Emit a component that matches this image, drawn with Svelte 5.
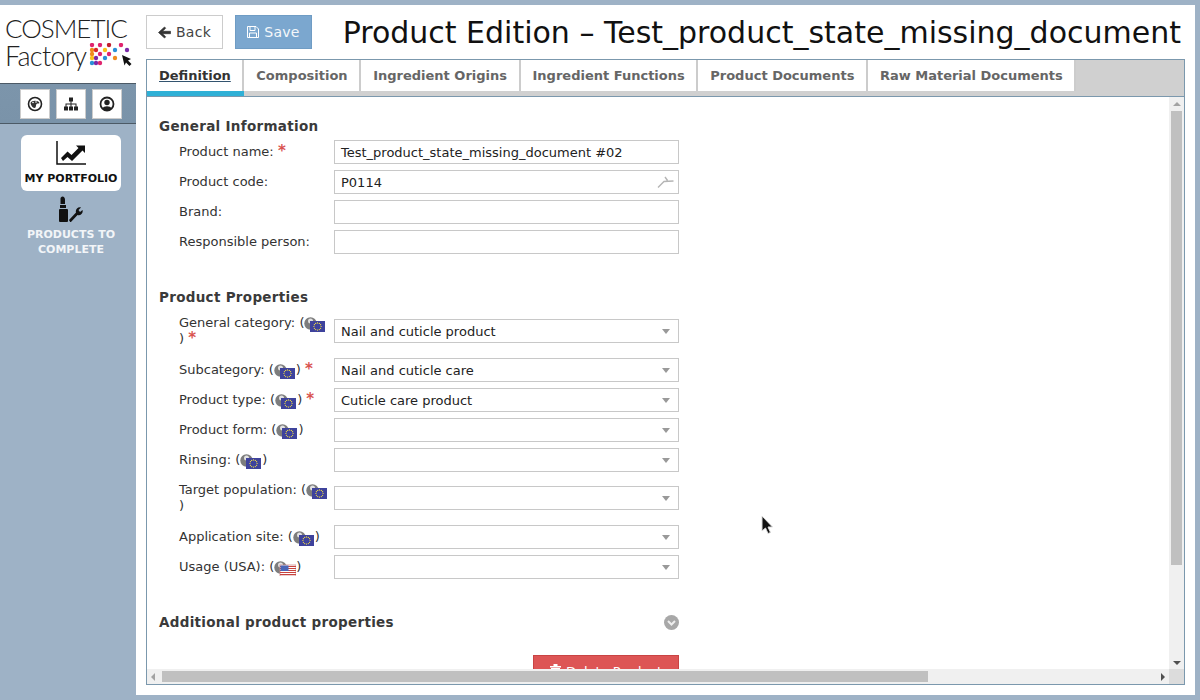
<script>
	const tabs = [
		'Definition',
		'Composition',
		'Ingredient Origins',
		'Ingredient Functions',
		'Product Documents',
		'Raw Material Documents',
	];
	const general = [
		{ label: 'Product name:', value: 'Test_product_state_missing_document #02', required: true },
		{ label: 'Product code:', value: 'P0114', tool: true },
		{ label: 'Brand:', value: '' },
		{ label: 'Responsible person:', value: '' },
	];
	const properties = [
		{ label: 'General category:', value: 'Nail and cuticle product', required: true, tall: true },
		{ label: 'Subcategory:', value: 'Nail and cuticle care', required: true },
		{ label: 'Product type:', value: 'Cuticle care product', required: true },
		{ label: 'Product form:', value: '' },
		{ label: 'Rinsing:', value: '' },
		{ label: 'Target population:', value: '', tall: true },
		{ label: 'Application site:', value: '' },
		{ label: 'Usage (USA):', value: '', usa: true },
	];
	const dots = [
		[4, 2, '#e0246e'], [12, 2, '#e0246e'], [21, 2, '#c2202f'], [33, 2, '#e0246e'],
		[4, 7, '#f08a1d'], [8, 7, '#d9262c'], [17, 7, '#fbc21b'], [27, 7, '#2b8fd8'], [39, 7, '#7a2aa8'],
		[4, 11, '#f08a1d'], [12, 11, '#e0246e'], [21, 11, '#e0246e'],
		[4, 15, '#fbc21b'], [8, 15, '#7a2aa8'], [17, 15, '#2b8fd8'], [27, 15, '#f08a1d'],
		[4, 20, '#2b8fd8'], [8, 20, '#7a2aa8'], [12, 20, '#e0246e'],
	];
	const starAngles = [0, 30, 60, 90, 120, 150, 180, 210, 240, 270, 300, 330];
</script>

{#snippet origin(usa)}
	(<svg class="origin-icon" width="22" height="15" viewBox="0 0 22 15">
		<circle cx="6.500" cy="6.500" r="6.200" fill="#7d7d7d" />
		<circle cx="6.500" cy="4" r="2.500" fill="#e2e2e2" />
		{#if usa}
			<rect x="6" y="4" width="16" height="11" fill="#fff" stroke="#d08a8a" stroke-width="0.8" />
			{#each [5, 7, 9, 11, 13] as y}
				<rect x="6" {y} width="16" height="1" fill="#c8423e" />
			{/each}
			<rect x="6.500" y="4.500" width="8" height="5.500" fill="#4a66b8" />
		{:else}
			<rect x="6" y="4" width="15" height="11" fill="#3e429c" />
			{#each starAngles as a}
				<circle cx={13.5 + 3.6 * Math.cos((a * Math.PI) / 180)} cy={9.5 + 3.6 * Math.sin((a * Math.PI) / 180)} r="0.600" fill="#ffe93a" />
			{/each}
		{/if}
	</svg>)
{/snippet}

<div class="page">
	<aside class="sidebar">
		<div class="logo">
			<div class="logo-top">COSMETIC</div>
			<div class="logo-bottom">
				<span>Factory</span>
				<svg class="logo-dots" width="46" height="24" viewBox="0 0 46 24">
					{#each dots as [x, y, c]}
						<circle cx={x} cy={y} r="2.200" fill={c} />
					{/each}
					<path d="M34 12l9 4-3 1.500 3.500 3.500-2 2-3.500-3.500-1.500 3z" fill="#111" />
				</svg>
			</div>
		</div>
		<div class="toolbar">
			<button class="tool" aria-label="Palette">
				<svg width="16" height="16" viewBox="0 0 16 16">
					<circle cx="8" cy="8" r="6.500" fill="none" stroke="#222" stroke-width="1.600" />
					<path d="M3.500 7c1-3 8-3 9 0-1 1-2 0-3 1s0 3-1.500 4C6 12 4 10 3.500 7z" fill="#333" />
					<circle cx="6" cy="6.500" r="0.800" fill="#fff" />
					<circle cx="9" cy="6" r="0.800" fill="#fff" />
				</svg>
			</button>
			<button class="tool" aria-label="Organisation">
				<svg width="16" height="16" viewBox="0 0 16 16" fill="#222">
					<rect x="6" y="1.500" width="4" height="4" />
					<rect x="1" y="10.500" width="4" height="4" />
					<rect x="6" y="10.500" width="4" height="4" />
					<rect x="11" y="10.500" width="4" height="4" />
					<path d="M7.500 5h1v2.500H13.500V11h-1V8.500h-4V11h-1V8.500h-4V11h-1V7.500h5z" />
				</svg>
			</button>
			<button class="tool" aria-label="Account">
				<svg width="16" height="16" viewBox="0 0 16 16">
					<circle cx="8" cy="8" r="6.500" fill="none" stroke="#222" stroke-width="1.800" />
					<circle cx="8" cy="6.500" r="2.700" fill="#222" />
					<path d="M3.500 12.500c1-3 8-3 9 0-2 2.500-7 2.500-9 0z" fill="#222" />
				</svg>
			</button>
		</div>
		<nav class="menu">
			<a class="menu-item active" href="#portfolio">
				<svg width="30" height="24" viewBox="0 0 30 24">
					<path d="M1 0v23h29" fill="none" stroke="#111" stroke-width="1.500" />
					<path d="M5 17l6.500-6.500 4 3.500 7-7-2.500-2.500H29v7.500l-2.500-2.500-10.500 10.500-4.500-4-4.500 4z" fill="#111" />
				</svg>
				<span>MY PORTFOLIO</span>
			</a>
			<a class="menu-item" href="#complete">
				<svg width="26" height="26" viewBox="0 0 26 26">
					<path d="M4.500 0.500c1.500 0 2.500 1.500 2.500 3V8H2.500V2.500c0-1 1-2 2-2z" fill="#111" />
					<rect x="2" y="9" width="6" height="3" fill="#111" />
					<rect x="1" y="13" width="9" height="13" rx="1" fill="#111" />
					<path d="M11 24l7-7.500c-1-3 2-6 5-5l-2.500 2.500 1.500 2 2.500-2c1 3-2 6-5 5l-7 7.500z" fill="#111" />
				</svg>
				<span>PRODUCTS TO COMPLETE</span>
			</a>
		</nav>
	</aside>

	<main class="main">
		<header class="header">
			<div class="actions">
				<button class="btn back">
					<svg width="13" height="13" viewBox="0 0 13 13"><path d="M6.500 1l1.200 1.200L4.500 5.300H12.500v2.400H4.500l3.200 3.100L6.500 12 0.500 6.500z" fill="#333" stroke="#333" stroke-width="0.700" /></svg>
					Back
				</button>
				<button class="btn save">
					<svg width="12" height="12" viewBox="0 0 12 12"><path d="M0.500 0.500H9L11.500 3v8.500H0.500z M3 1v3.500h5V1 M2.500 11V7h7v4" fill="none" stroke="#fff" stroke-width="1" /></svg>
					Save
				</button>
			</div>
			<h1>Product Edition – Test_product_state_missing_document</h1>
		</header>

		<section class="frame">
			<div class="tabs">
				{#each tabs as tab, i}
					<a class="tab" class:current={i === 0} href="#tab">{tab}</a>
				{/each}
			</div>
			<div class="body">
				<div class="content">
					<h3>General Information</h3>
					<div class="rows">
						{#each general as row}
							<div class="row">
								<span class="label">{row.label}{#if row.required}&nbsp;<em>*</em>{/if}</span>
								<div class="field">
									{row.value}
									{#if row.tool}
										<svg class="wrench" width="18" height="12" viewBox="0 0 18 12">
											<path d="M1 11.500L7 5.500l9.500-0.500M8 1l2.500 3.500" fill="none" stroke="#b5b5b5" stroke-width="1.400" />
										</svg>
									{/if}
								</div>
							</div>
						{/each}
					</div>

					<h3 class="second">Product Properties</h3>
					<div class="rows">
						{#each properties as row}
							<div class="row" class:tall={row.tall}>
								<span class="label">{row.label} {@render origin(row.usa)}{#if row.required}&nbsp;<em>*</em>{/if}</span>
								<div class="field">
									{row.value}
									<i class="caret"></i>
								</div>
							</div>
						{/each}
					</div>

					<div class="additional">
						<h3>Additional product properties</h3>
						<svg width="15" height="15" viewBox="0 0 15 15">
							<circle cx="7.500" cy="7.500" r="7.500" fill="#a8a8a8" />
							<path d="M4 6l3.500 3.500L11 6" fill="none" stroke="#eee" stroke-width="2" />
						</svg>
					</div>
					<div class="danger">
						<button class="delete">
							<svg width="11" height="12" viewBox="0 0 11 12" fill="#fff"><path d="M0 2h11v1.500H0zM3.500 0h4v2h-4zM1 4h9v8H1z" /></svg>
							Delete Product
						</button>
					</div>
				</div>
				<div class="vbar">
					<i class="arrow up"></i>
					<div class="vthumb"></div>
					<i class="arrow down"></i>
				</div>
				<div class="hbar">
					<i class="arrow left"></i>
					<div class="hthumb"></div>
					<i class="arrow right"></i>
				</div>
				<div class="corner"></div>
			</div>
		</section>
	</main>

	<svg class="cursor" width="14" height="20" viewBox="0 0 14 20">
		<path d="M1 1v15l3.500-3 2.500 5.500 2.500-1-2.500-5.500h4.500z" fill="#111" stroke="#ddd" stroke-width="1" />
	</svg>
</div>

<style>
	:global(body) {
		background: #9eb2c6;
	}
	.page {
		position: relative;
		display: flex;
		height: 700px;
		box-sizing: border-box;
		padding: 5px 5px 5px 0;
		background: #9eb2c6;
		font-family: 'DejaVu Sans', sans-serif;
		font-size: 13px;
		color: #333;
		overflow: hidden;
	}
	.sidebar {
		width: 136px;
		flex: none;
		margin-bottom: -5px;
	}
	.logo {
		height: 78px;
		box-sizing: border-box;
		padding: 9px 0 0 5px;
		background: #fff;
		font-family: Lato, sans-serif;
		font-weight: 300;
		line-height: 28px;
		color: #222;
	}
	.logo-top {
		font-size: 26px;
		letter-spacing: -1px;
	}
	.logo-bottom {
		display: flex;
		align-items: flex-start;
		font-size: 27px;
		letter-spacing: -0.7px;
	}
	.logo-dots {
		margin: 1px 0 0 2px;
	}
	.toolbar {
		display: flex;
		justify-content: center;
		gap: 6px;
		height: 41px;
		box-sizing: border-box;
		padding: 5px 0 0 6px;
		border-top: 1px solid #4c5a66;
		border-bottom: 1px solid #4c5a66;
		background: linear-gradient(#7c95ab, #7a93a9);
	}
	.tool {
		display: flex;
		align-items: center;
		justify-content: center;
		width: 30px;
		height: 30px;
		padding: 0;
		background: #fff;
		border: 1px solid #ccc;
	}
	.menu {
		display: flex;
		flex-direction: column;
		align-items: center;
		padding: 11px 0 0 6px;
	}
	.menu-item {
		display: flex;
		flex-direction: column;
		align-items: center;
		width: 100px;
		box-sizing: border-box;
		font-size: 11px;
		font-weight: 700;
		line-height: 15px;
		text-align: center;
		text-decoration: none;
		color: #f2f5f8;
	}
	.menu-item.active {
		height: 56px;
		padding-top: 6px;
		gap: 6px;
		background: #fff;
		border-radius: 6px;
		color: #111;
		margin-bottom: 5px;
	}
	.menu-item:not(.active) {
		gap: 5px;
	}
	.main {
		flex: 1;
		min-width: 0;
		display: flex;
		flex-direction: column;
		box-sizing: border-box;
		padding: 10px;
		background: #fff;
	}
	.header {
		display: flex;
		align-items: center;
		justify-content: space-between;
		height: 34px;
		margin-bottom: 10px;
	}
	.actions {
		display: flex;
		gap: 12px;
	}
	.btn {
		display: flex;
		align-items: center;
		justify-content: center;
		gap: 5px;
		width: 77px;
		height: 34px;
		padding: 0;
		font: inherit;
		font-size: 14px;
		letter-spacing: 0.3px;
	}
	.back {
		background: #fff;
		border: 1px solid #ccc;
		color: #444;
	}
	.save {
		background: #7ba7cf;
		border: 1px solid #6f9cc4;
		color: #f4f7fa;
	}
	h1 {
		margin: 0;
		padding: 1px 4px 0 0;
		font-size: 30px;
		font-weight: 400;
		line-height: 34px;
		color: #111;
		white-space: nowrap;
	}
	.frame {
		flex: 1;
		min-height: 0;
		display: flex;
		flex-direction: column;
		border: 1px solid #7b98ad;
	}
	.tabs {
		display: flex;
		height: 36px;
		flex: none;
		background: #d0d0d0;
		border-bottom: 1px solid #7b98ad;
	}
	.tab {
		height: 31px;
		box-sizing: border-box;
		padding: 8px 11.5px 0 12px;
		background: #fff;
		border-right: 2px solid #ccc;
		font-weight: 700;
		line-height: 16px;
		text-decoration: none;
		color: #666;
	}
	.tab.current {
		color: #333;
		text-decoration: underline;
		text-decoration-color: #33536f;
		box-shadow: 0 5px 0 #2fb0d6;
	}
	.body {
		flex: 1;
		min-height: 0;
		display: grid;
		grid-template-columns: 1fr 15px;
		grid-template-rows: 1fr 15px;
	}
	.content {
		overflow: hidden;
		padding: 20px 0 0 12px;
	}
	h3 {
		margin: 0;
		font-size: 13.5px;
		font-weight: 700;
		line-height: 18px;
		letter-spacing: 0.3px;
		color: #3a3a3a;
	}
	h3.second {
		margin-top: 34px;
	}
	.rows {
		display: flex;
		flex-direction: column;
		gap: 6px;
		margin: 5px 0 0 20px;
	}
	.row {
		display: grid;
		grid-template-columns: 150px 345px;
		column-gap: 5px;
		align-items: center;
	}
	.row.tall {
		margin: 4px 0 5px;
	}
	.label {
		line-height: 16px;
	}
	.label em {
		font-style: normal;
		font-size: 15px;
		font-weight: 700;
		line-height: 12px;
		color: #d9534f;
	}
	.origin-icon {
		vertical-align: -1px;
		margin: -4px 0;
	}
	.field {
		position: relative;
		height: 24px;
		box-sizing: border-box;
		padding-left: 6px;
		background: #fff;
		border: 1px solid #c8c8c8;
		line-height: 23px;
		color: #222;
	}
	.caret {
		position: absolute;
		right: 8px;
		top: 9px;
		border: 4.5px solid transparent;
		border-top: 5px solid #999;
		border-bottom: 0;
	}
	.wrench {
		position: absolute;
		right: 3px;
		top: 5px;
	}
	.additional {
		display: flex;
		justify-content: space-between;
		align-items: center;
		width: 520px;
		margin-top: 34px;
	}
	.danger {
		display: flex;
		justify-content: flex-end;
		width: 520px;
		margin-top: 24px;
	}
	.delete {
		display: flex;
		align-items: flex-start;
		justify-content: center;
		gap: 5px;
		width: 146px;
		height: 34px;
		padding: 8px 0 0;
		background: #dd5555;
		border: 1px solid #c94444;
		font: inherit;
		color: #fff;
	}
	.vbar {
		display: flex;
		flex-direction: column;
		align-items: center;
		background: #f0f0f0;
	}
	.vthumb {
		width: 11px;
		height: 454px;
		margin-top: 5px;
		background: #c0c0c0;
	}
	.hbar {
		display: flex;
		align-items: center;
		background: #f0f0f0;
	}
	.hthumb {
		width: 766px;
		height: 11px;
		margin-left: 7px;
		background: #c0c0c0;
	}
	.corner {
		background: #dcdcdc;
	}
	.arrow {
		display: block;
		flex: none;
		width: 0;
		height: 0;
	}
	.arrow.up {
		margin-top: 5px;
		border: 4px solid transparent;
		border-bottom: 4px solid #a3a3a3;
		border-top: 0;
	}
	.arrow.down {
		margin-top: auto;
		margin-bottom: 4px;
		border: 4px solid transparent;
		border-top: 4px solid #505050;
		border-bottom: 0;
	}
	.arrow.left {
		margin-left: 4px;
		border: 4px solid transparent;
		border-right: 4px solid #a3a3a3;
		border-left: 0;
	}
	.arrow.right {
		margin-left: auto;
		margin-right: 4px;
		border: 4px solid transparent;
		border-left: 4px solid #505050;
		border-right: 0;
	}
	.cursor {
		position: absolute;
		left: 761px;
		top: 515px;
	}
</style>
